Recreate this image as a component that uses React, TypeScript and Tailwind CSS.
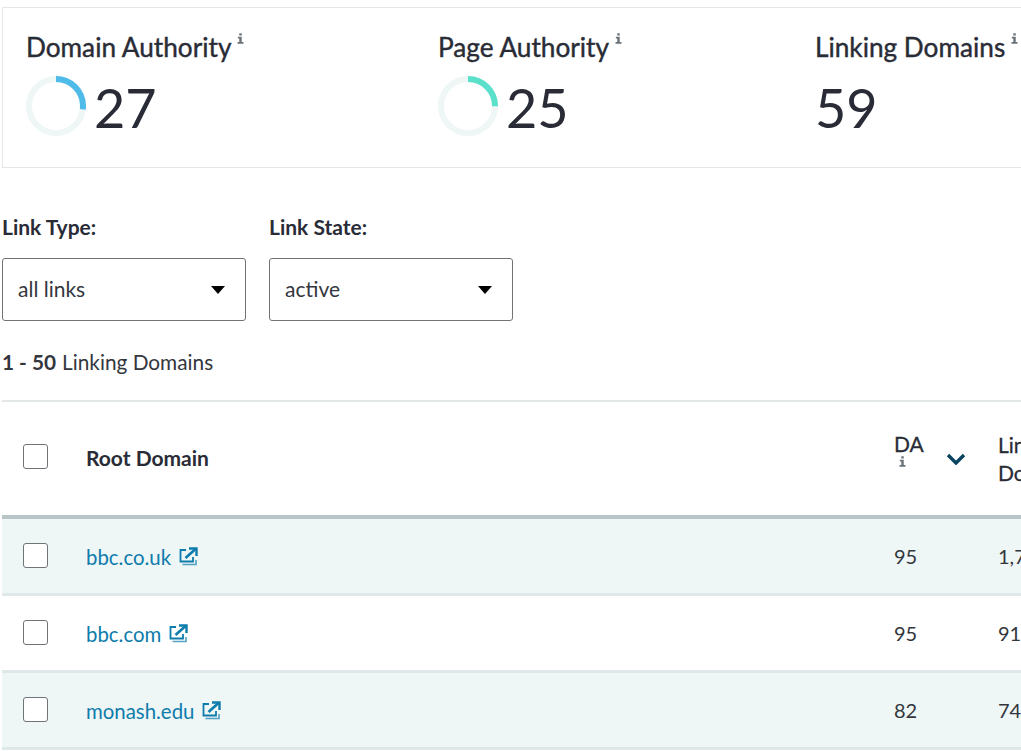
import React from "react";

const font = { fontFamily: "Lato, 'Open Sans', sans-serif" };

function Info({ className = "" }: { className?: string }) {
  return (
    <svg viewBox="0 0 8 12" className={`w-[7px] h-[11px] ${className}`} fill="#6b7278" aria-hidden>
      <rect x="2.6" y="0" width="2.8" height="2.6" />
      <path d="M1 4h4.4v6H7.4v2H.6v-2h2V6H1z" />
    </svg>
  );
}

function Ring({ color, pct }: { color: string; pct: number }) {
  const r = 27;
  const c = 2 * Math.PI * r;
  return (
    <svg width="60" height="60" viewBox="0 0 60 60" className="shrink-0">
      <circle cx="30" cy="30" r={r} fill="none" stroke="#eef6f6" strokeWidth="6" />
      <circle
        cx="30"
        cy="30"
        r={r}
        fill="none"
        stroke={color}
        strokeWidth="6"
        strokeDasharray={`${(c * pct) / 100} ${c}`}
        transform="rotate(-90 30 30)"
      />
    </svg>
  );
}

function Stat({ title, value, ring, className }: { title: string; value: string; ring?: React.ReactNode; className: string }) {
  return (
    <div className={`shrink-0 ${className}`}>
      <div className="flex items-start h-[33px] text-[26.2px] leading-[30px] [-webkit-text-stroke:0.4px_#292c36] text-[#292c36] whitespace-nowrap">
        {title}
        <Info className="ml-[6px] mt-[1px]" />
      </div>
      <div className="flex items-center h-[60px] mt-[11px]">
        {ring}
        <span className="text-[54px] leading-[60px] mt-[3px] text-[#292c36] ml-[8px] first:ml-0">{value}</span>
      </div>
    </div>
  );
}

function Select({ label, value }: { label: string; value: string }) {
  return (
    <div className="w-[244px]">
      <div className="text-[21px] leading-[24px] font-bold text-[#292c36] -mt-[1px]">{label}</div>
      <div className="mt-[19px] h-[63px] border border-[#6f7479] rounded-[3px] flex items-center justify-between pl-[15px] pr-[20px] text-[21px] text-[#33363d]">
        <span className="-mt-[2px]">{value}</span>
        <span className="w-0 h-0 border-x-[7px] border-x-transparent border-t-[8px] border-t-black" />
      </div>
    </div>
  );
}

function Check({ className = "" }: { className?: string }) {
  return <span className={`block w-[25px] h-[25px] shrink-0 bg-white border border-[#6f7479] rounded-[3px] ${className}`} />;
}

function Ext() {
  return (
    <svg width="19" height="19" viewBox="0 0 19 19" fill="none" stroke="#0e7cac" strokeWidth="1.8" className="ml-[8px] mt-[1px] shrink-0">
      <path d="M7 3H1.5v11.5H14V10" />
      <path d="M3.5 17.5H17V13" strokeWidth="1.6" opacity="0.7" />
      <path d="M6.5 11 16.5 2" strokeWidth="2.6" />
      <path d="M10 1.5h7.5V9" strokeWidth="2.4" />
    </svg>
  );
}

function Row({ name, da, ld, shaded }: { name: string; da: string; ld: string; shaded?: boolean }) {
  return (
    <div className={`flex items-center h-[77px] border-b-[3px] border-b-[#dfe8e9] pl-[21px] ${shaded ? "bg-[#eef6f6]" : "bg-white"}`}>
      <Check className="-mt-[2px]" />
      <div className="flex items-center w-[846px] shrink-0 pl-[38px] text-[20.4px] text-[#0e7cac]">
        <span className="mt-[3px]">{name}</span>
        <Ext />
      </div>
      <div className="w-[104px] shrink-0 -mt-[1px] text-[20px] text-[#33363d]">{da}</div>
      <div className="shrink-0 -mt-[1px] text-[20px] text-[#33363d]">{ld}</div>
    </div>
  );
}

export default function App() {
  return (
    <div style={font} className="w-[1021px] h-[751px] overflow-hidden bg-white relative">
      <div className="pt-[7px] pl-[2px] w-[1100px]">
        <div className="flex h-[161px] border border-[#e3e7e8] pl-[23px] pt-[24px]">
          <Stat className="w-[412px]" title="Domain Authority" value="27" ring={<Ring color="#4fbbe8" pct={27} />} />
          <Stat className="w-[377px]" title="Page Authority" value="25" ring={<Ring color="#5be0cc" pct={25} />} />
          <Stat className="w-[260px]" title="Linking Domains" value="59" />
        </div>
        <div className="flex gap-[23px] mt-[48px]">
          <Select label="Link Type:" value="all links" />
          <Select label="Link State:" value="active" />
        </div>
        <div className="mt-[28px] h-[26px] leading-[26px] text-[20.8px] text-[#33363d]">
          <span className="font-bold">1 - 50</span>
          <span className="ml-[6px]">Linking Domains</span>
        </div>
        <div className="mt-[25px] border-t-[2px] border-t-[#e3e7e8]">
          <div className="flex items-center h-[117px] border-b-[4px] border-b-[#b9c4c7] pl-[21px] pb-[1px]">
            <Check className="-mt-[4px]" />
            <div className="w-[846px] shrink-0 pl-[38px] text-[21px] font-bold text-[#292c36]">Root Domain</div>
            <div className="w-[104px] shrink-0 relative text-[21px] leading-[24px] [-webkit-text-stroke:0.3px_#292c36] text-[#292c36] pb-[28px]">
              DA
              <Info className="absolute left-[5px] top-[24px]" />
              <svg width="20" height="12" viewBox="0 0 20 12" fill="none" stroke="#0b4460" strokeWidth="3.4" className="absolute left-[52px] top-[21px]">
                <path d="M2 2l8 8 8-8" />
              </svg>
            </div>
            <div className="shrink-0 text-[21px] leading-[28px] pt-[2px] [-webkit-text-stroke:0.3px_#292c36] text-[#292c36] w-[100px]">Linking Domains</div>
          </div>
          <Row shaded name="bbc.co.uk" da="95" ld="1,757" />
          <Row name="bbc.com" da="95" ld="910" />
          <Row shaded name="monash.edu" da="82" ld="743" />
        </div>
      </div>
    </div>
  );
}
